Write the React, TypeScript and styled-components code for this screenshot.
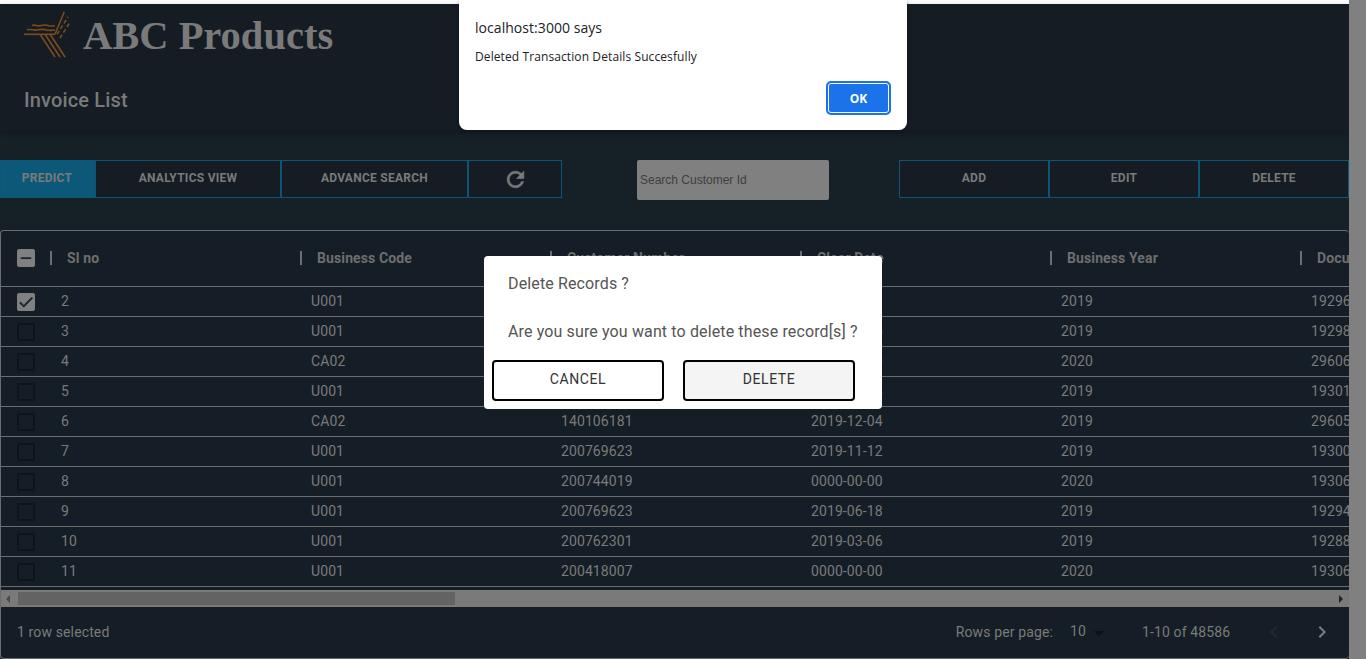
import React from "react";
import styled, { createGlobalStyle } from "styled-components";

const Global = createGlobalStyle`
  html, body { margin: 0; padding: 0; height: 100%; overflow: hidden; background: #16202a; }
  * { box-sizing: border-box; }
  #root { height: 100%; }
`;

const Shell = styled.div`
  position: relative;
  display: flex;
  width: 1366px;
  height: 659px;
  overflow: hidden;
  font-family: Roboto, "Liberation Sans", sans-serif;
  color: #7d7d7d;
`;

const Main = styled.div`
  display: flex;
  flex-direction: column;
  width: 1349px;
  height: 100%;
  padding-top: 4px;
  background: linear-gradient(#ffffff 4px, #162027 4px);
`;

const VScroll = styled.div`
  width: 17px;
  height: 100%;
  background: #808080;
`;

const Header = styled.header`
  height: 127px;
  flex: none;
  padding: 8px 24px 0;
  background: #151c24;
  box-shadow: 0 2px 6px rgba(0, 0, 0, 0.25);
`;

const Brand = styled.div`
  display: flex;
  align-items: flex-start;
  gap: 13px;
  height: 48px;
`;

const LogoMark = styled.svg`
  margin-top: -2px;
  flex: none;
`;

const BrandName = styled.span`
  font-family: "Liberation Serif", serif;
  font-weight: 700;
  font-size: 40.5px;
  line-height: 48px;
  color: #7a7a7a;
`;

const PageTitle = styled.h1`
  margin: 25px 0 0;
  font-size: 20px;
  line-height: 30px;
  font-weight: 500;
  letter-spacing: 0.15px;
  color: #7a7a7a;
`;

const Toolbar = styled.div`
  display: flex;
  align-items: flex-start;
  margin-top: 29px;
  height: 40px;
  flex: none;
`;

const ButtonGroup = styled.div`
  display: flex;
`;

const ToolButton = styled.button<{ $w: number; $active?: boolean }>`
  display: flex;
  align-items: center;
  justify-content: center;
  width: ${(p) => p.$w}px;
  height: 38px;
  padding: 0 ${(p) => (p.$active ? "1px" : "0")} 3px 0;
  border: 1px solid #0d5575;
  background: ${(p) => (p.$active ? "#0c5878" : "#151c24")};
  color: #7a7a7a;
  font-family: inherit;
  font-size: 12px;
  font-weight: 700;
  letter-spacing: 0.27px;
`;

const RefreshMark = styled.svg`
  margin-top: 3px;
`;

const SearchBox = styled.div`
  width: 192px;
  height: 40px;
  margin: 0 70px 0 75px;
  padding-left: 3px;
  display: flex;
  align-items: center;
  background: #808080;
  border-radius: 2px;
  color: #3f3f3f;
  font-family: "Liberation Sans", Arial, sans-serif;
  font-size: 12px;
`;

const Card = styled.section`
  margin-top: 30px;
  flex: 1;
  min-height: 0;
  display: flex;
  flex-direction: column;
  border: 1px solid #6c6c6c;
  border-right: none;
  border-radius: 4px;
  overflow: hidden;
  background: #151e26;
`;

const Rows = styled.div`
  flex: none;
  height: 359px;
  overflow: hidden;
`;

const HeadRow = styled.div`
  display: flex;
  align-items: center;
  width: 1800px;
  height: 56px;
  border-bottom: 1px solid #6c6c6c;
`;

const HeadCheckCell = styled.div`
  width: 49px;
  flex: none;
  padding-left: 16px;
  display: flex;
  margin-top: -1px;
`;

const HeadCell = styled.div`
  position: relative;
  width: 250px;
  flex: none;
  padding-left: 17px;
  font-size: 14px;
  font-weight: 700;
  line-height: 20px;
  letter-spacing: 0.12px;
  margin-top: -2px;
  color: #6e6e6e;
  &::before {
    content: "";
    position: absolute;
    left: 0;
    top: 3px;
    width: 2px;
    height: 14px;
    background: #6e6e6e;
  }
`;

const Row = styled.div`
  display: flex;
  align-items: center;
  width: 1800px;
  height: 30px;
  border-bottom: 1px solid #6c6c6c;
`;

const CheckCell = styled.div`
  width: 60px;
  flex: none;
  padding-left: 16px;
  display: flex;
`;

const Cell = styled.div`
  width: 250px;
  flex: none;
  margin-top: -1px;
  font-size: 14px;
  line-height: 20px;
  font-weight: 400;
  letter-spacing: 0.1px;
  color: #7a7a7a;
`;

const Box = styled.span<{ $on?: boolean }>`
  display: inline-flex;
  align-items: center;
  justify-content: center;
  width: 18px;
  height: 18px;
  border-radius: 2px;
  background: ${(p) => (p.$on ? "#808080" : "transparent")};
  border: ${(p) => (p.$on ? "none" : "2px solid #0d151a")};
`;

const HScroll = styled.div`
  flex: none;
  display: flex;
  align-items: center;
  justify-content: space-between;
  height: 17px;
  padding: 0 6px 0 5px;
  background: #7a7a7a;
  position: relative;
`;

const HThumb = styled.div`
  position: absolute;
  left: 17px;
  top: 2px;
  width: 437px;
  height: 13px;
  background: #636363;
`;

const Arrow = styled.span<{ $dir: "l" | "r" }>`
  width: 0;
  height: 0;
  border-top: 4px solid transparent;
  border-bottom: 4px solid transparent;
  ${(p) => (p.$dir === "l" ? "border-right: 4px solid #4a4a4a;" : "border-left: 4px solid #222;")}
`;

const Footer = styled.footer`
  flex: 1;
  display: flex;
  align-items: center;
  padding: 0 3px 2px 16px;
  font-size: 14px;
  letter-spacing: 0.13px;
  color: #7a7a7a;
`;

const Selected = styled.span`
  margin-right: auto;
`;

const Pager = styled.div`
  display: flex;
  align-items: center;
`;

const PageSize = styled.span`
  margin-left: 17px;
  margin-top: -2px;
  display: flex;
  align-items: center;
  color: #7a7a7a;
`;

const Caret = styled.span`
  margin-left: 8px;
  margin-top: 5px;
  width: 0;
  height: 0;
  border-left: 5px solid transparent;
  border-right: 5px solid transparent;
  border-top: 5px solid #0b1116;
`;

const PageCount = styled.span`
  margin-left: 38px;
  width: 108px;
`;

const PageNav = styled.button<{ $off?: boolean }>`
  width: 48px;
  height: 24px;
  padding: 0;
  display: flex;
  align-items: center;
  justify-content: center;
  background: none;
  border: none;
  color: ${(p) => (p.$off ? "#222b33" : "#7d7d7d")};
`;

const AlertBox = styled.div`
  position: absolute;
  left: 459px;
  top: 0;
  width: 448px;
  height: 130px;
  padding: 19px 16px 0;
  background: #fff;
  border-radius: 0 0 8px 8px;
  box-shadow: 0 1px 4px rgba(0, 0, 0, 0.3);
  font-family: "Open Sans", "Noto Sans", sans-serif;
  color: #202124;
`;

const AlertTitle = styled.div`
  font-size: 14px;
  line-height: 18px;
  letter-spacing: 0.05px;
`;

const AlertText = styled.div`
  margin-top: 11px;
  font-size: 12px;
  line-height: 18px;
  letter-spacing: 0.1px;
`;

const AlertActions = styled.div`
  display: flex;
  justify-content: flex-end;
  margin-top: 15px;
`;

const OkButton = styled.button`
  width: 65px;
  height: 34px;
  padding: 0;
  border: 2px solid #1a73e8;
  box-shadow: inset 0 0 0 1px #fff;
  border-radius: 5px;
  background: #1a73e8;
  color: #fff;
  font-family: inherit;
  font-size: 12px;
  font-weight: 700;
`;

const Modal = styled.div`
  position: absolute;
  left: 484px;
  top: 256px;
  width: 398px;
  height: 153px;
  padding: 18px 8px 0;
  background: #fff;
  border-radius: 4px;
  color: #555;
  font-size: 16px;
  letter-spacing: 0.13px;
`;

const ModalTitle = styled.div`
  padding-left: 16px;
  line-height: 20px;
`;

const ModalText = styled.div`
  margin-top: 28px;
  padding-left: 16px;
  line-height: 20px;
`;

const ModalActions = styled.div`
  display: flex;
  gap: 19px;
  margin-top: 18px;
`;

const ModalButton = styled.button<{ $fill?: boolean }>`
  width: 172px;
  height: 41px;
  padding: 0 0 3px;
  border: 2px solid #000;
  border-radius: 4px;
  background: ${(p) => (p.$fill ? "#f4f4f4" : "#fff")};
  color: #333;
  font-family: inherit;
  font-size: 14px;
  font-weight: 400;
  letter-spacing: 0.6px;
`;

const columns = ["Sl no", "Business Code", "Customer Number", "Clear Date", "Business Year", "Document Id"];

const rows = [
  ["2", "U001", "200980828", "2019-02-11", "2019", "1929646410"],
  ["3", "U001", "200792734", "2019-08-26", "2019", "1929873765"],
  ["4", "CA02", "140105686", "0000-00-00", "2020", "2960623488"],
  ["5", "U001", "200769623", "2019-11-25", "2019", "1930147974"],
  ["6", "CA02", "140106181", "2019-12-04", "2019", "2960581231"],
  ["7", "U001", "200769623", "2019-11-12", "2019", "1930083275"],
  ["8", "U001", "200744019", "0000-00-00", "2020", "1930659387"],
  ["9", "U001", "200769623", "2019-06-18", "2019", "1929439637"],
  ["10", "U001", "200762301", "2019-03-06", "2019", "1928819746"],
  ["11", "U001", "200418007", "0000-00-00", "2020", "1930610806"],
];

const Logo = () => (
  <LogoMark width="46" height="48" viewBox="24 10 46 48" fill="none" stroke="#7c4c1c" strokeWidth="1.6">
    <path d="M24 34.3H55" />
    <path d="M32 25.5c3-1.2 5 .9 8 .2s5-1.2 8-.2 5 .6 7 .2" />
    <path d="M27 29.8c4-1.2 6 .9 10 .2s6-1.2 9-.2 6 .6 9 .2" />
    <path d="M55 34.3L64.3 11.7" />
    <path d="M40 34.3L55 57M45 34.3L60 57M50 34.3L65 57" />
    <path d="M57 34.3L68 17M60 38L69.5 23" strokeDasharray="4 2.5" />
  </LogoMark>
);

const RefreshIcon = () => (
  <RefreshMark width="25" height="25" viewBox="0 0 24 24" fill="#7a7a7a" stroke="#7a7a7a" strokeWidth="0.6">
    <path d="M17.65 6.35C16.2 4.9 14.21 4 12 4c-4.42 0-7.99 3.58-7.99 8s3.57 8 7.99 8c3.73 0 6.84-2.55 7.73-6h-2.08c-.82 2.33-3.04 4-5.65 4-3.31 0-6-2.69-6-6s2.69-6 6-6c1.66 0 3.14.69 4.22 1.78L13 11h7V4l-2.35 2.35z" />
  </RefreshMark>
);

const Chevron = ({ left }: { left?: boolean }) => (
  <svg width="24" height="24" viewBox="0 0 24 24" fill="currentColor">
    <path d={left ? "M15.41 7.41L14 6l-6 6 6 6 1.41-1.41L10.83 12z" : "M10 6L8.59 7.41 13.17 12l-4.58 4.59L10 18l6-6z"} />
  </svg>
);

const CheckMark = () => (
  <svg width="18" height="18" viewBox="0 0 24 24" fill="#1b242c" stroke="#1b242c" strokeWidth="0.8">
    <path d="M9 16.17L4.83 12l-1.42 1.41L9 19 21 7l-1.41-1.41z" />
  </svg>
);

const MinusMark = () => (
  <svg width="18" height="18" viewBox="0 0 24 24" fill="#1b242c">
    <path d="M5 11h14v2.4H5z" />
  </svg>
);

export default function App() {
  return (
    <Shell>
      <Global />
      <Main>
        <Header>
          <Brand>
            <Logo />
            <BrandName>ABC Products</BrandName>
          </Brand>
          <PageTitle>Invoice List</PageTitle>
        </Header>
        <Toolbar>
          <ButtonGroup>
            <ToolButton $w={95} $active>PREDICT</ToolButton>
            <ToolButton $w={186}>ANALYTICS VIEW</ToolButton>
            <ToolButton $w={187}>ADVANCE SEARCH</ToolButton>
            <ToolButton $w={94}><RefreshIcon /></ToolButton>
          </ButtonGroup>
          <SearchBox>Search Customer Id</SearchBox>
          <ButtonGroup>
            <ToolButton $w={150}>ADD</ToolButton>
            <ToolButton $w={150}>EDIT</ToolButton>
            <ToolButton $w={150}>DELETE</ToolButton>
          </ButtonGroup>
        </Toolbar>
        <Card>
          <Rows>
            <HeadRow>
              <HeadCheckCell>
                <Box $on><MinusMark /></Box>
              </HeadCheckCell>
              {columns.map((c) => (
                <HeadCell key={c}>{c}</HeadCell>
              ))}
            </HeadRow>
            {rows.map((r, i) => (
              <Row key={r[0]}>
                <CheckCell>
                  <Box $on={i === 0}>{i === 0 && <CheckMark />}</Box>
                </CheckCell>
                {r.map((v, j) => (
                  <Cell key={j}>{v}</Cell>
                ))}
              </Row>
            ))}
          </Rows>
          <HScroll>
            <HThumb />
            <Arrow $dir="l" />
            <Arrow $dir="r" />
          </HScroll>
          <Footer>
            <Selected>1 row selected</Selected>
            <Pager>
              <span>Rows per page:</span>
              <PageSize>10<Caret /></PageSize>
              <PageCount>1-10 of 48586</PageCount>
              <PageNav $off><Chevron left /></PageNav>
              <PageNav><Chevron /></PageNav>
            </Pager>
          </Footer>
        </Card>
      </Main>
      <VScroll />
      <AlertBox>
        <AlertTitle>localhost:3000 says</AlertTitle>
        <AlertText>Deleted Transaction Details Succesfully</AlertText>
        <AlertActions>
          <OkButton>OK</OkButton>
        </AlertActions>
      </AlertBox>
      <Modal>
        <ModalTitle>Delete Records ?</ModalTitle>
        <ModalText>Are you sure you want to delete these record[s] ?</ModalText>
        <ModalActions>
          <ModalButton>CANCEL</ModalButton>
          <ModalButton $fill>DELETE</ModalButton>
        </ModalActions>
      </Modal>
    </Shell>
  );
}
